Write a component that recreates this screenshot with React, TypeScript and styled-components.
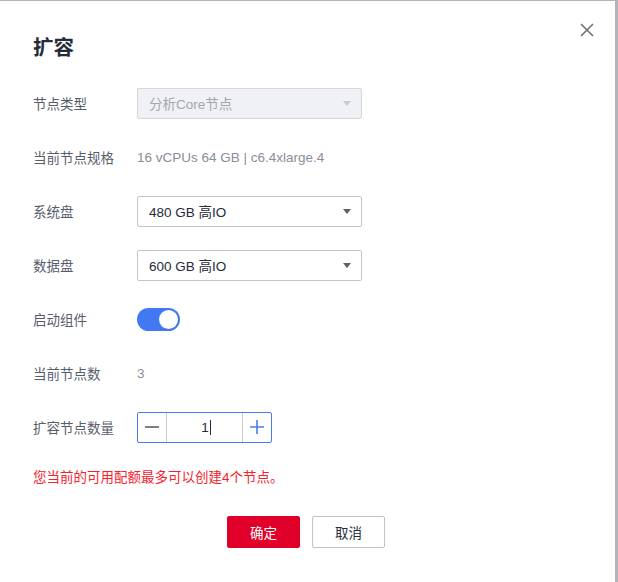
import React from 'react';
import styled, { createGlobalStyle } from 'styled-components';

const GlobalStyle = createGlobalStyle`
  html, body {
    margin: 0;
    padding: 0;
    background: #a9a9ad;
  }
  body {
    font-family: "Liberation Sans", "Noto Sans CJK SC", sans-serif;
  }
`;

const Backdrop = styled.div`
  width: 618px;
  height: 582px;
  padding-top: 1px;
  box-sizing: border-box;
  background: #b4b4b8;
`;

const Dialog = styled.div`
  position: relative;
  width: 615px;
  height: 581px;
  background: #fff;
  box-sizing: border-box;
  padding: 35px 0 0 33px;
`;

const Title = styled.h2`
  margin: 0 0 28px;
  font-size: 20.5px;
  line-height: 24px;
  font-weight: 700;
  color: #252b3a;
`;

const Close = styled.button`
  position: absolute;
  top: 22px;
  right: 20px;
  width: 16px;
  height: 16px;
  padding: 0;
  border: none;
  background: none;
  cursor: pointer;
`;

const Form = styled.div`
  display: flex;
  flex-direction: column;
  gap: 24px;
`;

const Row = styled.div`
  display: flex;
  align-items: center;
  height: 30px;
`;

const Label = styled.div`
  width: 104px;
  font-size: 13.5px;
  color: #575d6c;
`;

const Value = styled.div`
  font-size: 13.5px;
  color: #8a8e99;
`;

const Select = styled.div<{ $disabled?: boolean }>`
  display: flex;
  align-items: center;
  justify-content: space-between;
  box-sizing: border-box;
  width: 225px;
  height: 31px;
  padding: 0 10px 0 11px;
  border: 1px solid ${({ $disabled }) => ($disabled ? '#d4d6dc' : '#c2c5cc')};
  border-radius: 2px;
  background: ${({ $disabled }) => ($disabled ? '#f0f1f5' : '#fff')};
  font-size: 13.5px;
  color: ${({ $disabled }) => ($disabled ? '#a3a6ad' : '#252b3a')};
`;

const Caret = styled.span<{ $disabled?: boolean }>`
  width: 0;
  height: 0;
  border-left: 4px solid transparent;
  border-right: 4px solid transparent;
  border-top: 5px solid ${({ $disabled }) => ($disabled ? '#c8cad0' : '#5e6066')};
`;

const Switch = styled.div`
  position: relative;
  width: 43px;
  height: 23px;
  border-radius: 12px;
  background: #4278f2;

  &::after {
    content: '';
    position: absolute;
    top: 2px;
    right: 2px;
    width: 19px;
    height: 19px;
    border-radius: 50%;
    background: #fff;
  }
`;

const Stepper = styled.div`
  display: flex;
  box-sizing: border-box;
  width: 135px;
  height: 31px;
  border: 1px solid #4a7cf0;
  border-radius: 2px;
`;

const StepBtn = styled.div<{ $side: 'left' | 'right' }>`
  display: flex;
  align-items: center;
  justify-content: center;
  width: 28px;
  ${({ $side }) => ($side === 'left' ? 'border-right' : 'border-left')}: 1px solid #c9ccd3;
`;

const StepInput = styled.div`
  flex: 1;
  display: flex;
  align-items: center;
  justify-content: center;
  font-size: 13.5px;
  color: #252b3a;
  padding-left: 3px;
`;

const Cursor = styled.span`
  display: inline-block;
  width: 1px;
  height: 15px;
  margin-left: 1px;
  background: #252b3a;
`;

const ErrorText = styled.div`
  margin-top: 24px;
  font-size: 13.5px;
  color: #f5222d;
`;

const Footer = styled.div`
  display: flex;
  gap: 12px;
  margin: 30px 0 0 194px;
`;

const Button = styled.button<{ $primary?: boolean }>`
  width: 73px;
  height: 32px;
  padding: 0;
  border: 1px solid ${({ $primary }) => ($primary ? '#e1002a' : '#bfc2c8')};
  border-radius: 2px;
  background: ${({ $primary }) => ($primary ? '#e1002a' : '#fff')};
  color: ${({ $primary }) => ($primary ? '#fff' : '#252b3a')};
  font-family: inherit;
  font-size: 13.5px;
`;

export default function App() {
  return (
    <>
      <GlobalStyle />
      <Backdrop>
        <Dialog>
          <Close aria-label="close">
            <svg width="14" height="14" viewBox="0 0 14 14">
              <path d="M1 1L13 13M13 1L1 13" stroke="#6b6d73" strokeWidth="1.5" />
            </svg>
          </Close>
          <Title>扩容</Title>
          <Form>
            <Row>
              <Label>节点类型</Label>
              <Select $disabled>
                分析Core节点
                <Caret $disabled />
              </Select>
            </Row>
            <Row>
              <Label>当前节点规格</Label>
              <Value>16 vCPUs 64 GB | c6.4xlarge.4</Value>
            </Row>
            <Row>
              <Label>系统盘</Label>
              <Select>
                480 GB 高IO
                <Caret />
              </Select>
            </Row>
            <Row>
              <Label>数据盘</Label>
              <Select>
                600 GB 高IO
                <Caret />
              </Select>
            </Row>
            <Row>
              <Label>启动组件</Label>
              <Switch />
            </Row>
            <Row>
              <Label>当前节点数</Label>
              <Value>3</Value>
            </Row>
            <Row>
              <Label>扩容节点数量</Label>
              <Stepper>
                <StepBtn $side="left">
                  <svg width="16" height="16" viewBox="0 0 16 16">
                    <path d="M1 8H15" stroke="#5e6066" strokeWidth="1.6" />
                  </svg>
                </StepBtn>
                <StepInput>
                  1<Cursor />
                </StepInput>
                <StepBtn $side="right">
                  <svg width="16" height="16" viewBox="0 0 16 16">
                    <path d="M1 8H15M8 1V15" stroke="#4a7cf0" strokeWidth="1.6" />
                  </svg>
                </StepBtn>
              </Stepper>
            </Row>
          </Form>
          <ErrorText>您当前的可用配额最多可以创建4个节点。</ErrorText>
          <Footer>
            <Button $primary>确定</Button>
            <Button>取消</Button>
          </Footer>
        </Dialog>
      </Backdrop>
    </>
  );
}
